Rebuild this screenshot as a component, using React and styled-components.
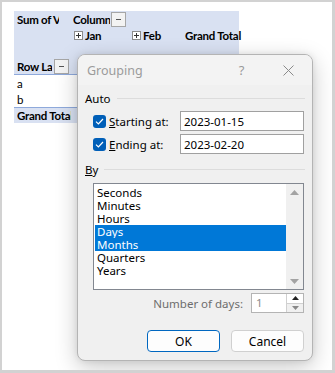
import React from 'react';
import styled, { createGlobalStyle } from 'styled-components';

const Global = createGlobalStyle`
  html, body { margin: 0; padding: 0; background: #fff; }
  * { box-sizing: border-box; }
`

// the whole picture with its grey frame
const Frame = styled.div`
  position: relative;
  width: 335px;
  height: 373px;
  overflow: hidden;
  background: #fff;
  border-style: solid;
  border-color: #d2d2d2;
  border-width: 2px 3px 3px 2px;
  padding: 9px 0 0 12px;
`

// pivot table behind the dialog
const Sheet = styled.div`
  display: flex;
  flex-direction: column;
  width: 225px;
  font-family: Lato, "Liberation Sans", sans-serif;
  font-size: 11.5px;
  letter-spacing: -0.25px;
  color: #000;
`

const Row = styled.div`
  display: grid;
  grid-template-columns: 57px 58px 53px 57px;
  height: 16px;
  background: ${p => (p.$blue ? '#d9e1f2' : '#fff')};
  border-top: ${p => (p.$topLine ? '1px solid #8ea9db' : 'none')};
  border-bottom: ${p => (p.$bottomLine ? '1px solid #8ea9db' : 'none')};
`

const Cell = styled.div`
  display: flex;
  align-items: center;
  gap: ${p => (p.$gap != null ? p.$gap : 2)}px;
  padding-left: ${p => p.$pad || 3}px;
  font-weight: ${p => (p.$bold ? 700 : 400)};
  white-space: nowrap;
  min-width: 0;
`

const CellText = styled.span`
  overflow: hidden;
  flex: 0 1 auto;
  min-width: 0;
  max-width: ${p => (p.$clip ? `${p.$clip}px` : 'none')};
`

const FilterBtn = styled.span`
  flex: 0 0 auto;
  width: 15px;
  height: 15px;
  margin-left: auto;
  margin-right: ${p => p.$mr || 0}px;
  border: 1px solid #a6a6a6;
  background: #f3f3f3;
  display: flex;
  align-items: center;
  justify-content: center;
  &::after {
    content: '';
    width: 5px;
    height: 1px;
    background: #555;
  }
`

const PlusBox = styled.span`
  width: 9px;
  height: 9px;
  border: 1px solid #8c8c8c;
  background: #fff;
  position: relative;
  flex: 0 0 auto;
  margin-left: 1px;
  &::before {
    content: '';
    position: absolute;
    left: 1px; top: 3px;
    width: 5px; height: 1px;
    background: #333;
  }
  &::after {
    content: '';
    position: absolute;
    left: 3px; top: 1px;
    width: 1px; height: 5px;
    background: #333;
  }
`

// Grouping dialog
const Dialog = styled.div`
  position: absolute;
  left: 75px;
  top: 52px;
  width: 236px;
  height: 307px;
  background: #f0f0f0;
  border: 1px solid #b4b4b4;
  border-radius: 8px;
  box-shadow: 0 6px 22px rgba(0, 0, 0, 0.22), 0 0 6px rgba(0, 0, 0, 0.08);
  font-family: "Noto Sans", "Open Sans", sans-serif;
  font-size: 11.5px;
  color: #000;
  display: flex;
  flex-direction: column;
  overflow: hidden;
`

const TitleBar = styled.div`
  height: 30px;
  display: flex;
  align-items: center;
  padding-left: 9px;
  background: #f3f3f3;
  color: #9b9b9b;
  font-size: 12.5px;
`

const TitleText = styled.span`
  flex: 1;
`

const TitleIcon = styled.span`
  width: 47px;
  display: flex;
  justify-content: center;
  align-items: center;
  color: #9a9a9a;
  font-size: 13px;
`

const Body = styled.div`
  flex: 1;
  display: flex;
  flex-direction: column;
  padding: 5px 7px 0 7px;
`

const GroupHead = styled.div`
  display: flex;
  align-items: center;
  gap: 6px;
  height: 16px;
  margin-top: ${p => p.$mt || 0}px;
  &::after {
    content: '';
    flex: 1;
    height: 1px;
    background: #dcdcdc;
  }
`

const FieldRow = styled.div`
  display: flex;
  align-items: center;
  height: 20px;
  margin-top: ${p => p.$mt || 0}px;
  padding-left: 8px;
`

const Check = styled.span`
  width: 13px;
  height: 13px;
  border-radius: 3px;
  background: #005fb8;
  display: flex;
  align-items: center;
  justify-content: center;
  margin-right: 3px;
`

const FieldLabel = styled.span`
  width: 71px;
`

const TextBox = styled.div`
  flex: 1;
  height: 20px;
  border: 1px solid #a0a0a0;
  background: #fff;
  display: flex;
  align-items: center;
  padding-left: 3px;
  margin-right: 1px;
`

const ListBox = styled.div`
  margin: 6px 1px 0 8px;
  height: 107px;
  border: 1px solid #828790;
  background: #fff;
  display: flex;
`

const Items = styled.div`
  flex: 1;
  padding: 2px 0 0 1px;
  display: flex;
  flex-direction: column;
`

const Item = styled.div`
  height: 13px;
  line-height: 13px;
  padding-left: 2px;
  background: ${p => (p.$sel ? '#0078d7' : 'transparent')};
  color: ${p => (p.$sel ? '#fff' : '#000')};
`

const ScrollBar = styled.div`
  width: 17px;
  background: #f0f0f0;
  display: flex;
  flex-direction: column;
  justify-content: space-between;
  align-items: center;
  padding: 6px 0 5px;
`

const SpinRow = styled.div`
  display: flex;
  justify-content: flex-end;
  align-items: center;
  gap: 8px;
  margin-top: 3px;
  margin-right: 1px;
  color: #6d6d6d;
`

const SpinBox = styled.div`
  width: 53px;
  height: 20px;
  border: 1px solid #b4b4b4;
  background: #fff;
  display: flex;
`

const SpinValue = styled.span`
  flex: 1;
  padding-left: 4px;
  line-height: 18px;
  color: #8a8a8a;
`

const SpinButtons = styled.div`
  width: 17px;
  border-left: 1px solid #d0d0d0;
  display: flex;
  flex-direction: column;
`

const SpinBtn = styled.div`
  flex: 1;
  display: flex;
  align-items: center;
  justify-content: center;
  background: ${p => (p.$dim ? '#f0f0f0' : '#fff')};
  border-top: ${p => (p.$dim ? '1px solid #d0d0d0' : 'none')};
`

const Buttons = styled.div`
  display: flex;
  justify-content: flex-end;
  gap: 11px;
  margin-top: 17px;
  margin-right: 1px;
`

const Button = styled.button`
  width: 73px;
  height: 22px;
  border-radius: 4px;
  border: 1px solid ${p => (p.$primary ? '#0067c0' : '#d0d0d0')};
  background: #fdfdfd;
  font-family: inherit;
  font-size: 12px;
  color: #000;
  padding: 0;
`

const Arrow = ({ up, color = '#a3a3a3', w = 9, h = 5 }) => (
  <svg width={w} height={h} viewBox="0 0 9 5">
    <path d={up ? 'M0 5 L4.5 0 L9 5 Z' : 'M0 0 L9 0 L4.5 5 Z'} fill={color} />
  </svg>
)

const Tick = () => (
  <svg width="9" height="7" viewBox="0 0 9 7">
    <path d="M1 3.6 L3.4 6 L8 1" fill="none" stroke="#fff" strokeWidth="1.2" />
  </svg>
)

const Close = () => (
  <svg width="11" height="11" viewBox="0 0 11 11">
    <path d="M0.5 0.5 L10.5 10.5 M10.5 0.5 L0.5 10.5" stroke="#8a8a8a" strokeWidth="1" />
  </svg>
)

const units = ['Seconds', 'Minutes', 'Hours', 'Days', 'Months', 'Quarters', 'Years'];
const picked = ['Days', 'Months'];

function App() {
  return (
    <Frame>
      <Global />
      <Sheet>
        <Row $blue>
          <Cell $bold><CellText $clip={42}>Sum of Values</CellText></Cell>
          <Cell $bold $pad={2} $gap={1}><CellText>Column Labels</CellText><FilterBtn $mr={3} /></Cell>
          <Cell />
          <Cell />
        </Row>
        <Row $blue>
          <Cell />
          <Cell $bold $pad={2}><PlusBox />Jan</Cell>
          <Cell $bold $pad={2}><PlusBox />Feb</Cell>
          <Cell $bold>Grand Total</Cell>
        </Row>
        <Row $blue>
          <Cell /><Cell /><Cell /><Cell />
        </Row>
        <Row $blue $bottomLine>
          <Cell $bold><CellText>Row Labels</CellText><FilterBtn $mr={2} /></Cell>
          <Cell /><Cell /><Cell />
        </Row>
        <Row>
          <Cell>a</Cell><Cell /><Cell /><Cell />
        </Row>
        <Row>
          <Cell>b</Cell><Cell /><Cell /><Cell />
        </Row>
        <Row $blue $topLine>
          <Cell $bold><CellText>Grand Total</CellText></Cell>
          <Cell /><Cell /><Cell />
        </Row>
      </Sheet>

      <Dialog>
        <TitleBar>
          <TitleText>Grouping</TitleText>
          <TitleIcon>?</TitleIcon>
          <TitleIcon><Close /></TitleIcon>
        </TitleBar>
        <Body>
          <GroupHead>Auto</GroupHead>
          <FieldRow $mt={5}>
            <Check><Tick /></Check>
            <FieldLabel><u>S</u>tarting at:</FieldLabel>
            <TextBox>2023-01-15</TextBox>
          </FieldRow>
          <FieldRow $mt={3}>
            <Check><Tick /></Check>
            <FieldLabel><u>E</u>nding at:</FieldLabel>
            <TextBox>2023-02-20</TextBox>
          </FieldRow>
          <GroupHead $mt={7}><span><u>B</u>y</span></GroupHead>
          <ListBox>
            <Items>
              {units.map(u => (
                <Item key={u} $sel={picked.includes(u)}>{u}</Item>
              ))}
            </Items>
            <ScrollBar>
              <Arrow up w={9} h={5} />
              <Arrow w={9} h={5} />
            </ScrollBar>
          </ListBox>
          <SpinRow>
            <span>Number of days:</span>
            <SpinBox>
              <SpinValue>1</SpinValue>
              <SpinButtons>
                <SpinBtn><Arrow up color="#222" w={7} h={4} /></SpinBtn>
                <SpinBtn $dim><Arrow color="#888" w={7} h={4} /></SpinBtn>
              </SpinButtons>
            </SpinBox>
          </SpinRow>
          <Buttons>
            <Button $primary>OK</Button>
            <Button>Cancel</Button>
          </Buttons>
        </Body>
      </Dialog>
    </Frame>
  );
}

export default App
